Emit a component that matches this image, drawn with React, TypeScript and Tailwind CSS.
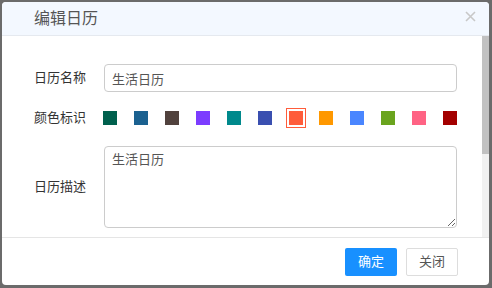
import { useState } from 'react';

const colors = [
  '#00604d',
  '#1b6190',
  '#51423d',
  '#7c3cff',
  '#00898c',
  '#3a4fb0',
  '#ff5c3a',
  '#ff9800',
  '#4a86ff',
  '#6aa41e',
  '#ff6384',
  '#a30000',
];

export default function App() {
  const [name, setName] = useState('生活日历');
  const [desc, setDesc] = useState('生活日历');
  const [color, setColor] = useState('#ff5c3a');

  return (
    <div
      className="w-[492px] h-[288px] bg-[#6b6b6b] p-[2px] pr-[3px] overflow-hidden"
      style={{ fontFamily: '"Liberation Sans", "Noto Sans CJK SC", sans-serif' }}
    >
      <div className="h-[283px] bg-white rounded-[4px] flex flex-col overflow-hidden">
        <div className="h-[34px] shrink-0 bg-[#f3f8ff] border-b border-[#e5e9ef] flex items-center justify-between pl-[32px] pr-[13px]">
          <span className="text-[16px] text-[#555]">编辑日历</span>
          <svg width="11" height="11" viewBox="0 0 11 11" className="-mt-[4px]">
            <path d="M1 1L10 10M10 1L1 10" stroke="#c8c8c8" strokeWidth="1.6" />
          </svg>
        </div>

        <div className="h-[201px] shrink-0 flex">
          <div className="flex-1 overflow-hidden pt-[28px] pr-[25px]">
            <div className="flex items-center h-[28px]">
              <label className="w-[102px] pl-[32px] text-[13px] text-[#333]">日历名称</label>
              <input
                value={name}
                onChange={(e) => setName(e.target.value)}
                className="flex-1 h-[28px] px-[7px] rounded-[4px] border border-[#ccc] text-[13px] text-[#555] outline-none"
              />
            </div>

            <div className="flex items-center h-[20px] mt-[16px]">
              <label className="w-[102px] pl-[32px] text-[13px] text-[#333]">颜色标识</label>
              <div className="flex items-center gap-[16.9px] pl-[3px]">
                {colors.map((c) => (
                  <button
                    key={c}
                    type="button"
                    onClick={() => setColor(c)}
                    className={
                      c === color
                        ? 'w-[20px] h-[20px] p-[2px] border border-[#ff5c3a] -mx-[3px]'
                        : 'w-[14px] h-[14px]'
                    }
                  >
                    <span className="block w-[14px] h-[14px]" style={{ backgroundColor: c }} />
                  </button>
                ))}
              </div>
            </div>

            <div className="flex items-center mt-[18px]">
              <label className="w-[102px] pl-[32px] text-[13px] text-[#333]">日历描述</label>
              <textarea
                value={desc}
                onChange={(e) => setDesc(e.target.value)}
                className="flex-1 h-[82px] px-[7px] py-[3px] rounded-[4px] border border-[#ccc] text-[13px] text-[#555] outline-none"
              />
            </div>
          </div>
          <div className="w-[7px] bg-[#f1f1f1]">
            <div className="h-[118px] bg-[#c1c1c1]" />
          </div>
        </div>

        <div className="flex-1 border-t border-[#e5e5e5] flex items-center justify-end gap-[9px] pr-[31px]">
          <button className="w-[52px] h-[28px] rounded-[2px] bg-[#1890ff] text-white text-[13px]">确定</button>
          <button className="w-[52px] h-[28px] rounded-[2px] border border-[#ddd] text-[#555] text-[13px]">关闭</button>
        </div>
      </div>
    </div>
  );
}
